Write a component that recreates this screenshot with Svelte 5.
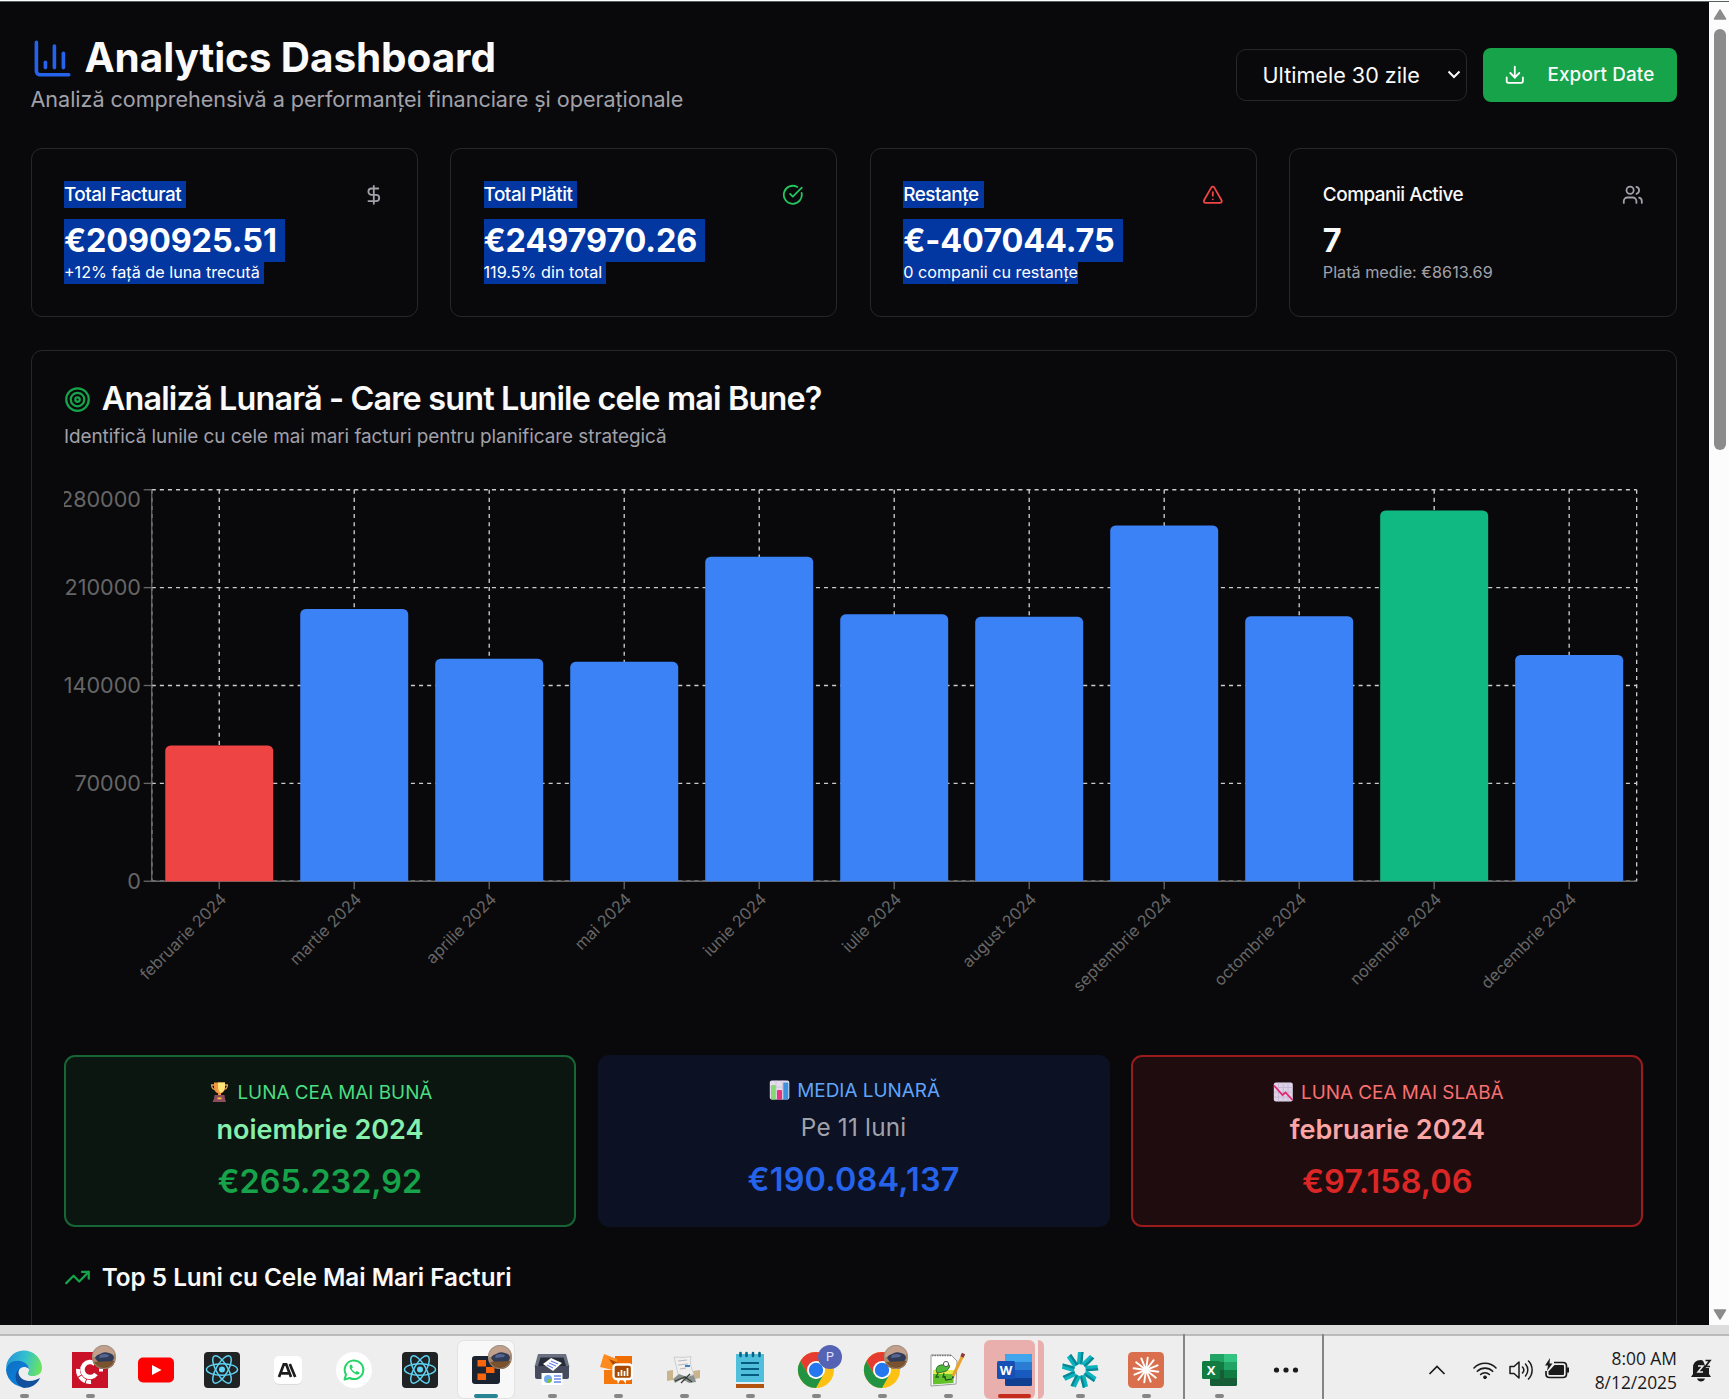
<script>
  const stats = [
    { title: 'Total Facturat', value: '€2090925.51', note: '+12% față de luna trecută', icon: 'dollar', selected: true },
    { title: 'Total Plătit', value: '€2497970.26', note: '119.5% din total', icon: 'check', selected: true },
    { title: 'Restanțe', value: '€-407044.75', note: '0 companii cu restanțe', icon: 'alert', selected: true, last: true },
    { title: 'Companii Active', value: '7', note: 'Plată medie: €8613.69', icon: 'users', selected: false }
  ];

  const months = [
    ['februarie 2024', 97158],
    ['martie 2024', 194700],
    ['aprilie 2024', 159200],
    ['mai 2024', 156900],
    ['iunie 2024', 232100],
    ['iulie 2024', 190900],
    ['august 2024', 189100],
    ['septembrie 2024', 254500],
    ['octombrie 2024', 189600],
    ['noiembrie 2024', 265232.92],
    ['decembrie 2024', 161900]
  ];

  // Chart geometry, in chart units (scaled by 1.35 on screen)
  const W = 1170;
  const left = 65;
  const right = W - 5;
  const top = 5;
  const bottom = 295;
  const band = (right - left) / months.length;
  const barW = 80;
  const max = 280000;
  const y = (v) => bottom - ((bottom - top) * v) / max;
  const cx = (i) => left + band * (i + 0.5);
  const fill = (i) => (i === 0 ? '#ef4444' : i === 9 ? '#10b981' : '#3b82f6');
  const bar = (i, v) => {
    const x0 = cx(i) - barW / 2;
    const x1 = x0 + barW;
    const t = y(v);
    return `M${x0} ${t + 4}a4 4 0 0 1 4 -4H${x1 - 4}a4 4 0 0 1 4 4V${bottom}H${x0}Z`;
  };
  const ticks = [0, 70000, 140000, 210000, 280000];

  const apps = ['edge', 'ccleaner', 'youtube', 'react', 'anthropic', 'whatsapp', 'react', 'replit', 'scanner', 'orange', 'roll', 'notepad', 'chromeP', 'chrome', 'npp', 'word', 'perplex', 'claude'];
  const idle = ['youtube', 'react', 'anthropic', 'whatsapp'];
  const rays = [0, 1, 2, 3, 4, 5, 6, 7, 8, 9, 10, 11];
</script>

{#snippet photo()}
  <circle cx="32" cy="5" r="12" fill="#a98467" />
  <path d="M21 1a12 12 0 0 1 22 0l-2 4H21z" fill="#c2a08c" />
  <path d="M23 6q1-3 5-4 4-3 9-1 5 1 5 5l-2 4H26z" fill="#303b58" />
  <path d="M28 3q4-2 9 0l-1 2-9 1z" fill="#566690" />
  <path d="M21 10l22-1q-2 8-11 8t-11-7z" fill="#7a522e" />
  <circle cx="32" cy="5" r="11.6" fill="none" stroke="#9a938c" stroke-width=".8" />
{/snippet}

{#snippet chromeLogo()}
  <circle cx="18" cy="18" r="18" fill="#fdc113" />
  <path d="M2.4 9A18 18 0 0 1 33.600 9H18z" fill="#e63b30" />
  <path d="M2.4 9l7.800 13.500L18 9z" fill="#e63b30" />
  <path d="M2.4 9l7.800 13.500 7.800 4.500 7.500-4.500L18 36A18 18 0 0 1 2.400 9z" fill="#229342" />
  <circle cx="18" cy="18" r="9" fill="#fff" />
  <circle cx="18" cy="18" r="7.2" fill="#2477ef" />
{/snippet}

<div class="screen">
  <div class="edge-line"></div>
  <div class="window">
    <main class="page">
      <header class="head">
        <div>
          <h1>
            <svg class="lu i32" viewBox="0 0 24 24" stroke="#2563eb"><path d="M3 3v16a2 2 0 0 0 2 2h16" /><path d="M18 17V9" /><path d="M13 17V5" /><path d="M8 17v-3" /></svg>
            Analytics Dashboard
          </h1>
          <p class="lead">Analiză comprehensivă a performanței financiare și operaționale</p>
        </div>
        <div class="actions">
          <div class="select">
            <span>Ultimele 30 zile</span>
            <svg width="14" height="9" viewBox="0 0 14 9" fill="none" stroke="#fafafa" stroke-width="2"><path d="M1.500 1.500 7 7l5.500-5.500" /></svg>
          </div>
          <button class="export">
            <svg class="lu i16" viewBox="0 0 24 24" stroke="#fff"><path d="M21 15v4a2 2 0 0 1-2 2H5a2 2 0 0 1-2-2v-4" /><path d="m7 10 5 5 5-5" /><path d="M12 15V3" /></svg>
            Export Date
          </button>
        </div>
      </header>

      <section class="stats">
        {#each stats as s}
          <article class="card stat" class:selected={s.selected} class:last={s.last}>
            <div class="stat-top">
              <h3><span class="t">{s.title}</span></h3>
              {#if s.icon === 'dollar'}
                <svg class="lu i16" viewBox="0 0 24 24" stroke="#a1a1aa"><path d="M12 2v20" /><path d="M17 5H9.500a3.500 3.500 0 0 0 0 7h5a3.500 3.500 0 0 1 0 7H6" /></svg>
              {:else if s.icon === 'check'}
                <svg class="lu i16" viewBox="0 0 24 24" stroke="#22c55e"><path d="M21.801 10A10 10 0 1 1 17 3.335" /><path d="m9 11 3 3L22 4" /></svg>
              {:else if s.icon === 'alert'}
                <svg class="lu i16" viewBox="0 0 24 24" stroke="#ef4444"><path d="m21.730 18-8-14a2 2 0 0 0-3.480 0l-8 14A2 2 0 0 0 4 21h16a2 2 0 0 0 1.730-3" /><path d="M12 9v4" /><path d="M12 17h.01" /></svg>
              {:else}
                <svg class="lu i16" viewBox="0 0 24 24" stroke="#a1a1aa"><path d="M16 21v-2a4 4 0 0 0-4-4H6a4 4 0 0 0-4 4v2" /><circle cx="9" cy="7" r="4" /><path d="M22 21v-2a4 4 0 0 0-3-3.870" /><path d="M16 3.130a4 4 0 0 1 0 7.750" /></svg>
              {/if}
            </div>
            <div class="value"><span class="v">{s.value}</span></div>
            <p class="note"><span class="n">{s.note}</span></p>
          </article>
        {/each}
      </section>

      <section class="card analysis">
        <h2>
          <svg class="lu i20" viewBox="0 0 24 24" stroke="#16a34a"><circle cx="12" cy="12" r="10" /><circle cx="12" cy="12" r="6" /><circle cx="12" cy="12" r="2" /></svg>
          Analiză Lunară - Care sunt Lunile cele mai Bune?
        </h2>
        <p class="desc">Identifică lunile cu cele mai mari facturi pentru planificare strategică</p>

        <svg class="chart" viewBox="0 0 {W} 400">
          <g stroke="#ccc" stroke-dasharray="3 3">
            {#each ticks as t}
              <line x1={left} x2={right} y1={y(t)} y2={y(t)} />
            {/each}
            {#each months as m, i}
              <line x1={cx(i)} x2={cx(i)} y1={top} y2={bottom} />
            {/each}
            <line x1={left} x2={left} y1={top} y2={bottom} />
            <line x1={right} x2={right} y1={top} y2={bottom} />
          </g>
          <g stroke="#666">
            <line x1={left} x2={right} y1={bottom} y2={bottom} />
            <line x1={left} x2={left} y1={top} y2={bottom} />
            {#each months as m, i}
              <line x1={cx(i)} x2={cx(i)} y1={bottom} y2={bottom + 6} />
            {/each}
            {#each ticks as t}
              <line x1={left - 6} x2={left} y1={y(t)} y2={y(t)} />
            {/each}
          </g>
          {#each ticks as t}
            <text class="ytick" x={left - 8} y={(t === max ? 12 : y(t)) + 5.7} text-anchor="end">{t}</text>
          {/each}
          {#each months as [name, v], i}
            <text class="xtick" transform="translate({cx(i)} {bottom + 8}) rotate(-45)" y="8.5" text-anchor="end">{name}</text>
            <path d={bar(i, v)} fill={fill(i)} />
          {/each}
        </svg>

        <div class="months">
          <div class="box good">
            <p class="label">
              <svg class="emoji" viewBox="0 0 25 20">
                <path d="M8 3H4.600q0 4.500 5 5M17 3h3.400q0 4.500-5 5" fill="none" stroke="#d9a05a" stroke-width="1.300" />
                <path d="M7 .5h11v4.500q0 5-4 6.300v2.200h-3v-2.200q-4-1.300-4-6.300z" fill="#f2973f" />
                <path d="M11 .5h7v5q-1 4-4 5.500-3-2-3-6z" fill="#ffe477" />
                <path d="M7.500 13h10l.5 3.500 1 3.500H5.500l1.500-3.500z" fill="#8d4c5c" />
                <path d="M10.500 15.500h4v1.800h-4z" fill="#f9c23c" />
              </svg>
              LUNA CEA MAI BUNĂ
            </p>
            <p class="name">noiembrie 2024</p>
            <p class="sum">€265.232,92</p>
          </div>
          <div class="box mid">
            <p class="label">
              <svg class="emoji" viewBox="0 0 25 20">
                <rect x="2.800" y=".5" width="19.500" height="19" rx="2" fill="#e4dced" />
                <path d="M9 .5v19M15.500.5v19M3 7h19M3 13h19" stroke="#cbbfd6" stroke-width=".8" />
                <rect x="4" y="5" width="4.800" height="14.500" rx=".8" fill="#86d972" />
                <rect x="10" y="10" width="5" height="9.500" rx=".8" fill="#e9357c" />
                <rect x="16.300" y="2.500" width="5" height="17" rx=".8" fill="#3d92dc" />
              </svg>
              MEDIA LUNARĂ
            </p>
            <p class="name">Pe 11 luni</p>
            <p class="sum">€190.084,137</p>
          </div>
          <div class="box bad">
            <p class="label">
              <svg class="emoji" viewBox="0 0 25 20">
                <rect x="2.800" y=".5" width="19" height="19" rx="2" fill="#ddd2e8" />
                <path d="M7.500.5v19M12.300.5v19M17 .5v19M3 5.500h19M3 10.200h19M3 15h19" stroke="#c4b5d2" stroke-width=".8" />
                <path d="m3 3.500 8.500 9.500 3-2.500 7 7.500" fill="none" stroke="#e3266f" stroke-width="1.700" />
              </svg>
              LUNA CEA MAI SLABĂ
            </p>
            <p class="name">februarie 2024</p>
            <p class="sum">€97.158,06</p>
          </div>
        </div>

        <h4>
          <svg class="lu i20" viewBox="0 0 24 24" stroke="#16a34a"><path d="m22 7-8.500 8.500-5-5L2 17" /><path d="M16 7h6v6" /></svg>
          Top 5 Luni cu Cele Mai Mari Facturi
        </h4>
      </section>
    </main>
    <div class="scroll">
      <svg width="14" height="11" viewBox="0 0 14 11"><path d="M7 1 12.500 10h-11z" fill="#8b8b8b" stroke="#8b8b8b" stroke-width="1.500" stroke-linejoin="round" /></svg>
      <div class="thumb"></div>
      <svg class="down" width="14" height="11" viewBox="0 0 14 11"><path d="M7 10 1.500 1h11z" fill="#8b8b8b" stroke="#8b8b8b" stroke-width="1.500" stroke-linejoin="round" /></svg>
    </div>
  </div>
  <div class="strip"></div>

  <footer class="taskbar">
    <div class="apps">
      {#each apps as app}
        <div class="app {app}">
          <svg class="glyph" viewBox="0 0 36 36">
            {#if app === 'edge'}
              <defs>
                <linearGradient id="edgeTop" x1="0" x2="1" y1=".3" y2=".5"><stop offset="0" stop-color="#2793d8" /><stop offset=".5" stop-color="#33bfd0" /><stop offset="1" stop-color="#6be35f" /></linearGradient>
                <linearGradient id="edgeLow" x1="0" x2="1" y1="0" y2="1"><stop offset="0" stop-color="#0d6fc4" /><stop offset="1" stop-color="#0b86e0" /></linearGradient>
              </defs>
              <path d="M0 17A18 18 0 0 1 36 16c0 6-5 8-9 8-5 0-6-2-4.500-4 2-4-1-9-8-10C7 9 2 12 0 17z" fill="url(#edgeTop)" />
              <path d="M0 18C1 11 8 8 14 9c6 1 9 5 9 8-6-5-12 0-11 6 1 7 8 11 14 10A18 18 0 0 1 0 18z" fill="url(#edgeLow)" />
              <path d="M14 16c-3 3-2 12 9 13 5 0 8-2 11-3-3 7-10 10-16 10-8-2-12-14-4-20z" fill="#124f9c" />
            {:else if app === 'ccleaner'}
              <path d="M0 0h36v36H0z" fill="#c91228" />
              <path d="M23 12a7.500 7.500 0 1 0 1 10" fill="none" stroke="#fff" stroke-width="4.500" />
              <path d="M6 17a12 12 0 0 0 13 13" fill="none" stroke="#fff" stroke-width="4" stroke-dasharray="7 1" />
              <path d="M27 18h4" stroke="#fff" stroke-width="3" />
              {@render photo()}
            {:else if app === 'youtube'}
              <rect y="5.500" width="36" height="25" rx="5" fill="#f00" />
              <path d="M14 13v10l9.500-5z" fill="#fff" />
            {:else if app === 'react'}
              <rect width="36" height="36" rx="4" fill="#212224" />
              <g fill="none" stroke="#5ed3f3" stroke-width="1.500">
                <ellipse cx="18" cy="17.500" rx="15.500" ry="5.800" />
                <ellipse cx="18" cy="17.500" rx="15.500" ry="5.800" transform="rotate(60 18 17.500)" />
                <ellipse cx="18" cy="17.500" rx="15.500" ry="5.800" transform="rotate(120 18 17.500)" />
              </g>
              <circle cx="18" cy="17.500" r="3" fill="#5ed3f3" />
            {:else if app === 'anthropic'}
              <rect x="4" y="4.500" width="28" height="28.500" rx="5" fill="#dcdcdc" />
              <rect x="4" y="4" width="28" height="28" rx="5" fill="#fff" />
              <path d="M9 25 13.800 12.300h2.400L21 25M11.500 21.300h7M19.800 12l5.400 13" fill="none" stroke="#1c1c1c" stroke-width="2.700" />
            {:else if app === 'whatsapp'}
              <circle cx="18" cy="18" r="18" fill="#fff" />
              <path d="M8.500 27.500 10 22.500a9.300 9.300 0 1 1 3.700 3.500z" fill="none" stroke="#25d366" stroke-width="2" stroke-linejoin="round" />
              <path d="M14.500 12.500c-2 2-.5 5 2 7.500s5.500 3.500 7 1.500l-.2-1.300-2.600-1.200-1.300 1.300c-2-1-3-2-3.700-3.700l1.200-1.300-1.100-2.600z" fill="#25d366" />
            {:else if app === 'replit'}
              <rect x="4" y="4" width="28" height="28" rx="3" fill="#1b2230" />
              <path d="M9.500 8h8.500v6.500H9.500zM18 15h8.500v6H18zM9.500 21.500h8.500V28H9.500z" fill="#f9650c" />
              {@render photo()}
            {:else if app === 'scanner'}
              <path d="M4 2h28l3.500 13H.5z" fill="#6a7080" />
              <path d="M6.500 5.500h23L32 14H4z" fill="#262b38" />
              <path d="M1 14h34v11q0 2-2 2H3q-2 0-2-2z" fill="#454b5c" />
              <path d="m17 6 11 5-9 8-10-7z" fill="#fff" />
              <path d="m17 9 7 3m-9-1 7 3m-9-1 6 3" stroke="#6a86e8" stroke-width="1.300" />
              <path d="M7.500 21h21v12h-21z" fill="#fff" />
              <circle cx="14" cy="27" r="4" fill="#6fa9ee" /><path d="M14 27h4a4 4 0 0 1-4 4z" fill="#7fc146" />
              <path d="M20 24h7M20 27h7M20 30h7" stroke="#6a86e8" stroke-width="1.600" />
            {:else if app === 'orange'}
              <path d="M15 4h17v28H15z" fill="#ef6c00" />
              <path d="M4 2 17 7v12L0 15z" fill="#ff8a1f" />
              <path d="M4 18h14v14H4z" fill="#f4780c" />
              <path d="m9 7 12 5-3 8z" fill="#a84a00" />
              <rect x="13.500" y="12.500" width="18.500" height="14.500" rx="3" fill="#a84a00" stroke="#fff" stroke-width="2.300" />
              <path d="M18.500 24v-4M21.500 24v-6M24.500 24v-5M27.500 24v-8" stroke="#fff" stroke-width="1.700" />
              <path d="M17 28h3l-2 4zM23 28h3v4z" fill="#fff" />
            {:else if app === 'roll'}
              <path d="M8 5q9 1 17-.5-2 8 3 18l-15 3Q10 14 8 5z" fill="#efefef" stroke="#c4c4c4" stroke-width=".8" />
              <path d="M12 9l9-1M12 13l10-1M14 17l6-1" stroke="#aaa" stroke-width=".8" />
              <path d="M19 13h5v2h-5z" fill="#3b82c4" />
              <path d="M1 19l6-1v10l-6 1zM27 19l7-1v8l-5 1z" fill="#c9b48c" />
              <path d="M7 27l6-5 8 3 7-2 2 7-7 1-7-4-7 4z" fill="#8a918c" />
              <path d="m9 29 10-4 7 5m-11 1 9-9" stroke="#343a38" stroke-width="1.200" fill="none" />
            {:else if app === 'notepad'}
              <path d="M4 30h28v6H4z" fill="#b4530f" /><path d="M4 29h28v3H4z" fill="#e6eef2" />
              <path d="M4 2h28v28H4z" fill="#4fbfdc" />
              <path d="M9 11h18M9 17h18M9 23h18" stroke="#045c80" stroke-width="1.800" />
              <path d="M8.500 1v3M14.500 1v3M21 1v3M27.500 1v3" stroke="#046485" stroke-width="2.600" stroke-linecap="round" />
            {:else if app === 'chromeP'}
              {@render chromeLogo()}
              <circle cx="32" cy="5" r="12" fill="#5563b5" />
              <text x="32" y="9.300" text-anchor="middle" font-size="12.500" fill="#dfe3ff" font-family="Roboto, sans-serif">P</text>
            {:else if app === 'chrome'}
              {@render chromeLogo()}
              {@render photo()}
            {:else if app === 'npp'}
              <path d="M1 3h20l6 6-1 23-25 2z" fill="#fff" stroke="#9a9a9a" stroke-width="1" />
              <path d="M2 3.500h19" stroke="#777" stroke-width="1.500" stroke-dasharray="1.500 1" />
              <path d="M3 18h21l-.5 13L3 32.500z" fill="#63c22c" /><path d="M3 18h21v4H3z" fill="#e8ec4a" />
              <path d="M6 18q1-6 8-5l4-1q3 1 1 4-2 4-6 4l-6 1z" fill="#4fb83a" stroke="#22611b" stroke-width=".8" />
              <path d="M8 21l-2 4h3m5-4-1 4h3" fill="none" stroke="#22611b" stroke-width="1.300" />
              <circle cx="16" cy="12" r="2.600" fill="#fff" stroke="#333" stroke-width=".8" />
              <path d="M14 24l2 4 6-1" stroke="#22491b" stroke-width="1.200" fill="none" />
              <path d="M23 24 33 3" stroke="#e9a42f" stroke-width="3" /><path d="m32 5 1.500-3.500" stroke="#8d3a3a" stroke-width="3.500" /><path d="m22 27 .5-3 2 1z" fill="#333" />
            {:else if app === 'word'}
              <rect x="9" y="2" width="27" height="32" rx="1.500" fill="#103f91" />
              <path d="M9 3.500Q9 2 10.500 2h24Q36 2 36 3.500V10H9z" fill="#41a5ee" /><path d="M9 10h27v8H9z" fill="#2b7cd3" /><path d="M9 18h27v8H9z" fill="#185abd" />
              <rect x="1" y="9" width="18" height="18" rx="1.500" fill="#1650b4" />
              <text x="10" y="22.600" text-anchor="middle" font-size="13" font-weight="700" fill="#fff" font-family="'Open Sans', sans-serif">W</text>
            {:else if app === 'perplex'}
              {#each [0, 1, 2, 3, 4, 5, 6, 7, 8] as r}
                <path d="M14.800 12.500 16 0h5.500L19.500 12z" fill="#0bb3bd" transform="rotate({r * 40} 18 18)" />
                <path d="M18 12.300 19.300 0h2.200L20.500 12.500z" fill="#078594" transform="rotate({r * 40} 18 18)" />
              {/each}
            {:else}
              <rect width="36" height="36" rx="4.500" fill="#da6f4d" />
              {#each rays as r}
                <path d="M18 18V5.500" stroke="#fff" stroke-width="1.900" stroke-linecap="round" transform="rotate({r * 30 + 8} 18 18)" />
              {/each}
              <circle cx="18" cy="18" r="3.500" fill="#fff" />
            {/if}
          </svg>
          {#if !idle.includes(app)}<i class="dot"></i>{/if}
        </div>
      {/each}
    </div>
    <div class="pinned">
      <div class="app excel">
        <svg class="glyph" viewBox="0 0 36 36">
          <rect x="9" y="2" width="27" height="32" rx="1.500" fill="#185c37" />
          <path d="M9 3.500Q9 2 10.500 2H23v8H9z" fill="#21a366" /><path d="M23 2h11.500Q36 2 36 3.500V10H23z" fill="#33c481" /><path d="M9 10h14v8H9z" fill="#107c41" /><path d="M23 10h13v8H23z" fill="#21a366" /><path d="M23 18h13v8H23z" fill="#107c41" />
          <rect x="1" y="9" width="18" height="18" rx="1.500" fill="#107c41" />
          <text x="10" y="22.500" text-anchor="middle" font-size="13" font-weight="700" fill="#fff" font-family="'Open Sans', sans-serif">X</text>
        </svg>
        <i class="dot"></i>
      </div>
      <svg class="more" width="26" height="6" viewBox="0 0 26 6" fill="#1a1a1a"><circle cx="3.500" cy="3" r="2.600" /><circle cx="13" cy="3" r="2.600" /><circle cx="22.500" cy="3" r="2.600" /></svg>
    </div>
    <div class="tray">
      <svg width="18" height="10" viewBox="0 0 18 10" fill="none" stroke="#1a1a1a" stroke-width="1.700"><path d="M1.500 9 9 1.500 16.500 9" /></svg>
      <svg class="wifi" width="24" height="20" viewBox="0 0 24 20" fill="none" stroke="#1a1a1a" stroke-width="1.600" stroke-linecap="round"><path d="M1 8a15 15 0 0 1 22 0M4.300 11.300a11 11 0 0 1 15.400 0M7.600 14.500a6.400 6.400 0 0 1 8.800 0" /><circle cx="12" cy="17.300" r="1.400" fill="#1a1a1a" stroke-width="1" /></svg>
      <svg class="sound" width="25" height="22" viewBox="0 0 25 22" fill="none" stroke="#1a1a1a" stroke-width="1.500" stroke-linecap="round" stroke-linejoin="round"><path d="M1 7.500h4L10 3v16l-5-4.500H1zM13.500 8a4.500 4.500 0 0 1 0 6M16.500 5a9 9 0 0 1 0 12M19.500 2a13 13 0 0 1 0 18" /></svg>
      <svg class="battery" width="25" height="22" viewBox="0 0 25 22"><path d="M9 3.500h9q3.500 0 3.500 3.500v8q0 3.500-3.500 3.500H4.500Q1 18.500 1 15v-3" fill="none" stroke="#1a1a1a" stroke-width="1.700" /><path d="M9.500 6h8.500q1 0 1 1v8q0 1-1 1H4.500q-1 0-1-1v-2.500z" fill="#1a1a1a" /><path d="M22 8.500h2v5h-2z" fill="#1a1a1a" /><path d="M5-1 0 6.500h3L2 12l5.500-7.500h-3z" fill="#1a1a1a" /></svg>
      <div class="clock"><span>8:00 AM</span><span>8/12/2025</span></div>
      <svg class="bell" width="22" height="24" viewBox="0 0 22 24"><path d="M3 10q0-8 8-8 6 1 8 8v6l2 3H1l2-3z" fill="#1a1a1a" /><path d="M7 20.500h8q-1 3-4 3t-4-3z" fill="#1a1a1a" /><path d="M12 0h10v10h-6z" fill="#eee" /><path d="M8 8h5l-5 6h5" fill="none" stroke="#eee" stroke-width="1.500" /><path d="M15.500 2.500h4.500l-4.500 6H20" fill="none" stroke="#1a1a1a" stroke-width="1.700" /></svg>
    </div>
  </footer>
</div>

<style>
  :global(html) { font-size: 21.6px; }
  :global(body) { overflow: hidden; background: #09090b; }
  h1, h2, h3, h4, p { margin: 0; }
  .screen { width: 1729px; height: 1399px; display: flex; flex-direction: column; overflow: hidden; font-family: Inter, sans-serif; color: #fafafa; }
  .edge-line { height: 1px; flex: none; background: #fdfdfd; border-bottom: 1px solid #56615f; }
  .window { height: 1323px; flex: none; display: flex; overflow: hidden; background: #09090b; }
  .page { flex: 1; min-width: 0; padding: 1.5rem 32.3px 0 30.5px; display: flex; flex-direction: column; }
  .lu { fill: none; stroke-width: 2; stroke-linecap: round; stroke-linejoin: round; flex: none; display: block; }
  .i32 { width: 2rem; height: 2rem; }
  .i20 { width: 1.25rem; height: 1.25rem; }
  .i16 { width: 1rem; height: 1rem; }

  .head { display: flex; justify-content: space-between; align-items: center; margin-bottom: 1.5rem; }
  h1 { display: flex; align-items: center; gap: .5rem; font-size: 1.875rem; line-height: 2.25rem; font-weight: 650; letter-spacing: -.1px; }
  .lead { font-size: 1rem; line-height: 1.5rem; color: #a1a1aa; letter-spacing: -.045px; }
  .actions { display: flex; align-items: center; gap: .75rem; }
  .select { box-sizing: border-box; width: 231px; height: 52px; border: 1px solid #27272a; border-radius: 10px; display: flex; align-items: center; justify-content: space-between; padding: 0 5px 0 26px; font-size: 1rem; }
  .export { width: 194px; height: 54px; border: 0; border-radius: 8px; background: #16a34a; color: #fafafa; font: 500 .875rem Inter, sans-serif; letter-spacing: .1px; white-space: nowrap; display: flex; align-items: center; gap: 1rem; padding: 0 0 0 1rem; }

  .card { border: 1px solid #27272a; border-radius: 11px; }
  .stats { display: grid; grid-template-columns: repeat(4, 1fr); gap: 1.5rem; margin-bottom: 1.5rem; }
  .stat { padding: 1.5rem; }
  .stat-top { display: flex; align-items: center; justify-content: space-between; padding-bottom: .5rem; }
  h3 { font-size: .875rem; line-height: 1.25rem; font-weight: 500; letter-spacing: -.025em; }
  .value { font-size: 1.5rem; line-height: 2rem; font-weight: 650; letter-spacing: -.1px; }
  .note { font-size: .75rem; line-height: 1rem; color: #a1a1aa; }
  .t, .v, .n { display: inline-block; vertical-align: top; }
  .selected span { background: #0236a1; color: #fff; }
  .selected .t { padding-right: 5px; }
  .selected .v { padding-right: 8px; }
  .selected .n { padding-right: 4px; }
  .last .n { padding-right: 0; }

  .analysis { padding: 1.5rem; height: 1100px; flex: none; }
  h2 { display: flex; align-items: center; gap: .5rem; font-size: 1.5rem; line-height: 1.5rem; font-weight: 600; letter-spacing: -.026em; }
  .desc { margin-top: .375rem; font-size: .875rem; line-height: 1.25rem; color: #a1a1aa; letter-spacing: -.04px; }
  .chart { display: block; width: 100%; height: 25rem; margin-top: 1.5rem; overflow: hidden; }
  .ytick { font-size: 16px; fill: #666; }
  .xtick { font-size: 12px; fill: #666; }

  .months { display: grid; grid-template-columns: repeat(3, 1fr); gap: 1rem; margin-top: 1.5rem; text-align: center; }
  .box { border-radius: 11px; padding: 1rem; }
  .good { background: #0b1610; border: 2px solid #166534; }
  .mid { background: #0c1123; }
  .bad { background: #1f0c0f; border: 2px solid #991b1b; }
  .label { display: flex; justify-content: center; align-items: center; gap: 5px; font-size: .875rem; line-height: 1.25rem; }
  .emoji { width: 25px; height: 20px; }
  .name { margin-top: .25rem; font-size: 1.25rem; line-height: 1.75rem; font-weight: 600; }
  .sum { margin-top: .5rem; font-size: 1.5rem; line-height: 2rem; font-weight: 600; }
  .good .label { color: #4ade80; } .good .name { color: #86efac; } .good .sum { color: #16a34a; }
  .mid .label { color: #60a5fa; } .mid .name { color: #a1a1aa; font-size: 1.125rem; font-weight: 400; letter-spacing: .2px; } .mid .sum { color: #2563eb; letter-spacing: .25px; }
  .bad .label { color: #f87171; } .bad .name { color: #fca5a5; } .bad .sum { color: #dc2626; letter-spacing: .1px; }
  h4 { display: flex; align-items: center; gap: .5rem; margin-top: 1.5rem; font-size: 1.125rem; line-height: 1.75rem; font-weight: 600; letter-spacing: -.03px; }

  .scroll { width: 20px; flex: none; box-sizing: border-box; background: #fcfcfc; display: flex; flex-direction: column; align-items: center; padding: 7px 0 5px 1px; }
  .scroll svg { flex: none; }
  .thumb { width: 12px; height: 421px; margin-top: 9px; border-radius: 6px; background: #8b8b8b; }
  .down { margin-top: auto; }
  .strip { height: 9px; flex: none; background: #ddd; }

  .taskbar { box-sizing: border-box; height: 65px; flex: none; border-top: 2px solid #bbb; background: #eee; display: flex; color: #1a1a1a; }
  .apps { width: 1183px; flex: none; box-sizing: border-box; padding: 16px 0 0 6px; display: flex; gap: 30px; }
  .app { position: relative; width: 36px; height: 36px; flex: none; }
  .glyph { display: block; width: 36px; height: 36px; overflow: visible; position: relative; }
  .dot { position: absolute; left: 14px; top: 42px; width: 9px; height: 4px; border-radius: 2px; background: #868686; }
  .replit::before { content: ''; position: absolute; left: -10px; top: -11px; width: 56px; height: 57px; border-radius: 6px; background: #f8f8f8; box-shadow: 0 0 0 1px #e3e3e3; }
  .replit .dot { left: 6px; width: 24px; background: #268493; }
  .word::before, .word::after { content: ''; position: absolute; top: -12px; height: 59px; border-radius: 6px; background: #e9afac; }
  .word::before { left: -12px; width: 51px; }
  .word::after { left: 42px; width: 6px; border-radius: 0 6px 6px 0; }
  .word .dot { left: 2px; width: 33px; background: #c42b1c; z-index: 1; }
  .word .glyph { z-index: 1; }
  .pinned { width: 137px; flex: none; border: solid #858585; border-width: 0 2px; margin-top: -2px; padding-top: 18px; display: flex; }
  .excel { margin-left: 16px; }
  .more { margin: 15px 0 0 36px; }
  .tray { flex: 1; display: flex; align-items: center; padding-left: 104px; height: 68px; }
  .tray svg { flex: none; overflow: visible; }
  .wifi { margin-left: 27px; }
  .sound { margin-left: 12px; }
  .battery { margin-left: 11px; }
  .clock { width: 107px; display: flex; flex-direction: column; text-align: right; font: 17.4px/24px 'Open Sans', sans-serif; }
  .bell { margin-left: 13px; }
</style>
